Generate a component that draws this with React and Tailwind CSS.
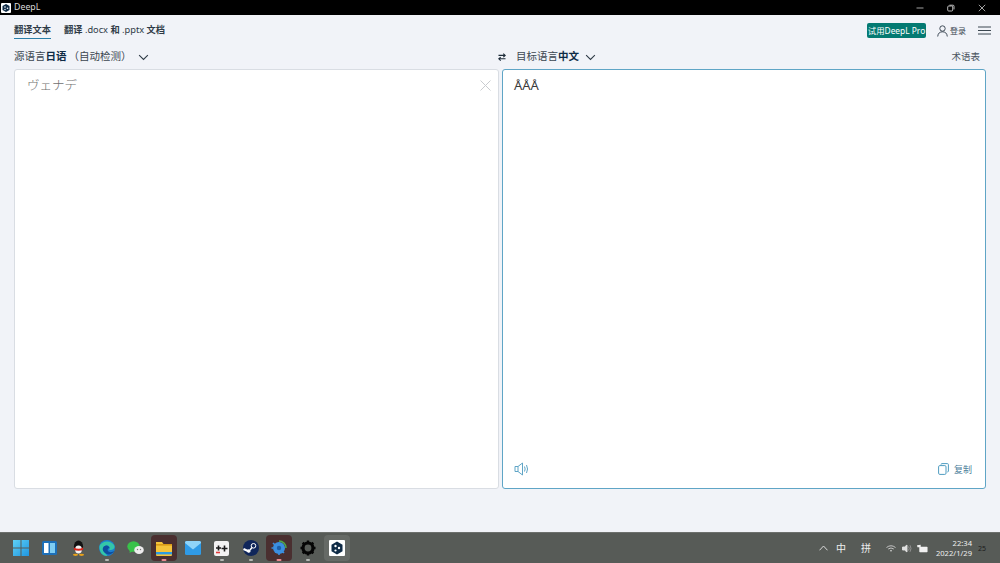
import React from "react";

function Chevron({ className }) {
  return (
    <svg viewBox="0 0 12 8" className={className} fill="none" stroke="currentColor" strokeWidth="1.2">
      <path d="M1 1.2 L6 6.2 L11 1.2" />
    </svg>
  );
}

function Logo({ size = 10 }) {
  return (
    <svg width={size} height={size} viewBox="0 0 20 20">
      <rect width="20" height="20" rx="2" fill="#fff" />
      <path d="M10 2 L17 6 V14 L10 18 L3 14 V6 Z" fill="#0f2b46" />
      <circle cx="8" cy="8" r="1.6" fill="#fff" />
      <circle cx="8" cy="13" r="1.4" fill="#fff" />
      <circle cx="13" cy="10.5" r="1.6" fill="#fff" />
    </svg>
  );
}

function Slot({ children, active, dot, hover }) {
  return (
    <div className={"relative w-[26px] h-[26px] rounded flex items-center justify-center " + (active ? "bg-[#4a2f30]" : hover ? "bg-[#666a66]" : "")}>
      {children}
      {dot && <div className={"absolute bottom-[0px] left-1/2 -translate-x-1/2 h-[2px] rounded " + (active ? "w-[5px] bg-[#e88a90]" : "w-[4px] bg-[#b5b8b5]")} />}
    </div>
  );
}

export default function App() {
  return (
    <div className="w-[1000px] h-[563px] overflow-hidden flex flex-col bg-[#f1f3f8] text-[#2e3a46] font-['Noto_Sans','Noto_Sans_CJK_SC',sans-serif]">
      {/* title bar */}
      <div className="h-[15px] shrink-0 bg-black flex items-center pl-[1px] text-[#d8d8d8]">
        <Logo size={10} />
        <span className="ml-[3px] text-[8.8px] leading-none">DeepL</span>
        <div className="ml-auto flex items-center text-white">
          <div className="w-[31px] flex justify-center">
            <svg width="8" height="8" viewBox="0 0 8 8"><path d="M0.5 4 H7.5" stroke="#ccc" strokeWidth="0.8" /></svg>
          </div>
          <div className="w-[31px] flex justify-center">
            <svg width="8" height="8" viewBox="0 0 8 8" fill="none" stroke="#ccc" strokeWidth="0.9"><rect x="0.7" y="2" width="5" height="5" rx="1" /><path d="M2.4 1.2 H6 Q7 1.2 7 2.2 V5.4" /></svg>
          </div>
          <div className="w-[31px] mr-[3px] flex justify-center">
            <svg width="8" height="8" viewBox="0 0 8 8" stroke="#ccc" strokeWidth="0.8"><path d="M0.8 0.8 L7.2 7.2 M7.2 0.8 L0.8 7.2" /></svg>
          </div>
        </div>
      </div>

      {/* tabs */}
      <div className="h-[27px] shrink-0 flex items-start pl-[14px] pr-[9px]">
        <div className="mt-[8px] flex flex-col">
          <span className="text-[9.25px] leading-[14px] font-bold text-[#2e3a46] whitespace-nowrap">翻译文本</span>
          <div className="h-[1px] mt-[1px] bg-[#2b7fa8] w-[37px]" />
        </div>
        <span className="ml-[13px] mt-[8px] text-[9.25px] leading-[14px] font-bold text-[#2e3a46] whitespace-nowrap">
          翻译<span className="font-normal"> .docx </span>和<span className="font-normal"> .pptx </span>文档
        </span>
        <div className="ml-auto mt-[8px] flex items-center">
          <div className="h-[15px] w-[59px] bg-[#047a72] rounded-[2px] text-[8.4px] leading-[15px] text-center text-white whitespace-nowrap">试用DeepL Pro</div>
          <svg className="ml-[11px]" width="11" height="12" viewBox="0 0 11 12" fill="none" stroke="#2e3a46" strokeWidth="0.9"><circle cx="5.5" cy="3.5" r="2.7" /><path d="M0.7 11.5 C1 8 3 6.8 5.5 6.8 S10 8 10.3 11.5" /></svg>
          <span className="ml-[2px] text-[8px] leading-none text-[#3b4650]">登录</span>
          <svg className="ml-[12px]" width="13" height="9" viewBox="0 0 13 9" stroke="#3b4650" strokeWidth="1"><path d="M0 1 H13 M0 4.5 H13 M0 8 H13" /></svg>
        </div>
      </div>

      {/* language row */}
      <div className="h-[27px] shrink-0 flex items-center pt-[3px] pl-[14px] pr-[20px]">
        <div className="w-[484px] flex items-center text-[10.5px] text-[#3b4650] whitespace-nowrap">
          <span>源语言</span><span className="font-bold text-[#0f2b46]">日语</span>
          <span className="ml-[2px]">（自动检测）</span>
          <Chevron className="ml-[6px] w-[11px] h-[7px] text-[#2e3a46]" />
        </div>
        <svg width="8" height="8" viewBox="0 0 8 8" fill="none" stroke="#1f2d3a" strokeWidth="1.1" className="-mt-[1px]"><path d="M0.5 2.4 H7 M5.3 0.6 L7.2 2.4 L5.3 4.2 M7.5 5.8 H1 M2.7 4.1 L0.8 5.8 L2.7 7.6" /></svg>
        <div className="ml-[10px] flex items-center text-[10.5px] text-[#3b4650] whitespace-nowrap">
          <span>目标语言</span><span className="font-bold text-[#0f2b46]">中文</span>
          <Chevron className="ml-[6px] w-[11px] h-[7px] text-[#2e3a46]" />
        </div>
        <span className="ml-auto text-[9.5px] text-[#4a545e]">术语表</span>
      </div>

      {/* panels */}
      <div className="flex pl-[14px] gap-[3px] h-[420px] shrink-0">
        <div className="w-[485px] bg-white border border-[#d9dde3] rounded-[3px] relative pl-[12px] pt-[6px]">
          <div className="text-[12.5px] leading-[18px] text-[#6f6f6f] font-['Noto_Sans_CJK_JP',sans-serif] font-light">ヴェナデ</div>
          <svg className="absolute top-[10px] right-[7px]" width="11" height="11" viewBox="0 0 11 11" stroke="#c9ccd0" strokeWidth="1"><path d="M0.5 0.5 L10.5 10.5 M10.5 0.5 L0.5 10.5" /></svg>
        </div>
        <div className="w-[484px] bg-white border border-[#5fa5c6] rounded-[3px] flex flex-col pl-[11px] pr-[13px] pt-[6px] pb-[12px]">
          <span className="text-[13px] leading-[18px] text-[#3a3a3a]">ÅÅÅ</span>
          <div className="mt-auto flex items-center justify-between">
            <svg width="16" height="14" viewBox="0 0 16 14" fill="none" stroke="#5fa5c6" strokeWidth="1"><path d="M1 4.5 H4 L8.5 1 V13 L4 9.5 H1 Z M4 4.5 V9.5" /><path d="M10.5 4.5 Q11.8 7 10.5 9.5 M12.5 3 Q14.6 7 12.5 11" /></svg>
            <div className="flex items-center">
              <svg width="11" height="12" viewBox="0 0 11 12" fill="none" stroke="#4f9cc0" strokeWidth="1"><path d="M3 1.6 Q3 0.6 4 0.6 H9.4 Q10.4 0.6 10.4 1.6 V8 Q10.4 9 9.4 9" /><rect x="0.6" y="2.6" width="7.4" height="8.8" rx="1.2" /></svg>
              <span className="ml-[5px] text-[9px] leading-none text-[#4f7f9c]">复制</span>
            </div>
          </div>
        </div>
      </div>

      <div className="flex-1" />

      {/* taskbar */}
      <div className="h-[31px] shrink-0 bg-[#575b57] border-t border-[#6d706d] flex items-center pl-[8px] pr-[14px]">
        <div className="flex items-center gap-[2.7px]">
          <Slot>
            <svg width="16" height="16" viewBox="0 0 16 16"><defs><linearGradient id="win" x1="0" y1="0" x2="1" y2="1"><stop offset="0" stopColor="#5fd0f5" /><stop offset="1" stopColor="#1f96e0" /></linearGradient></defs><path fill="url(#win)" d="M0 0 H7.5 V7.5 H0 Z M8.5 0 H16 V7.5 H8.5 Z M0 8.5 H7.5 V16 H0 Z M8.5 8.5 H16 V16 H8.5 Z" /></svg>
          </Slot>
          <Slot>
            <svg width="15" height="14" viewBox="0 0 15 14"><rect width="15" height="14" rx="1.5" fill="#1d6fb8" /><rect x="2" y="2" width="4.5" height="10" fill="#fff" /><rect x="8" y="2" width="5" height="10" fill="#7fcdf2" /></svg>
          </Slot>
          <Slot>
            <svg width="13" height="16" viewBox="0 0 13 16"><ellipse cx="6.5" cy="6.5" rx="4.6" ry="6" fill="#111" /><ellipse cx="6.5" cy="9.5" rx="3.4" ry="4" fill="#f4f4f4" /><path d="M1.8 7.5 Q6.5 10 11.2 7.5 L11 10 Q6.5 11.5 2 10 Z" fill="#d9261c" /><ellipse cx="3.5" cy="14.8" rx="2.6" ry="1.1" fill="#e9a21b" /><ellipse cx="9.5" cy="14.8" rx="2.6" ry="1.1" fill="#e9a21b" /></svg>
          </Slot>
          <Slot dot>
            <svg width="16" height="16" viewBox="0 0 16 16"><circle cx="8" cy="8" r="8" fill="#1b7fd0" /><path d="M0.5 6 C3 0 13 0 15.5 6 C16 9 13 10.5 10 10 C12 7 9.5 5 7 5.5 C3.5 6.2 2.5 10 6 13 C7 14 8 15 8 16 C3 16 0 11 0.5 6 Z" fill="#34c6a8" /><path d="M7 5.5 C3.5 6.2 2.5 10 6 13 C9 15.5 13 14.5 15.5 11 C13 12.5 10 12.5 9 11 C8 9.5 9 8 10.5 8 C10 6 8.5 5.2 7 5.5 Z" fill="#0e4d9e" /></svg>
          </Slot>
          <Slot>
            <svg width="17" height="14" viewBox="0 0 17 14"><ellipse cx="6.5" cy="5.5" rx="6.2" ry="5.2" fill="#39c24a" /><path d="M3 9 L2.5 12 L6 10 Z" fill="#39c24a" /><ellipse cx="12" cy="9" rx="4.8" ry="4" fill="#ededed" /><circle cx="10.5" cy="8.5" r="0.7" fill="#777" /><circle cx="13.5" cy="8.5" r="0.7" fill="#777" /></svg>
          </Slot>
          <Slot active dot>
            <svg width="16" height="15" viewBox="0 0 16 15"><path d="M0 1 H6 L7.5 3 H16 V14 Q16 15 15 15 H1 Q0 15 0 14 Z" fill="#f5c33b" /><rect x="0" y="3" width="16" height="1.6" fill="#d99a16" /><rect x="0" y="11" width="16" height="2.4" fill="#2c9ae0" /></svg>
          </Slot>
          <Slot>
            <svg width="16" height="14" viewBox="0 0 16 14"><rect width="16" height="14" rx="1.5" fill="#2f9be6" /><path d="M0 2 L8 8.5 L16 2 V1.5 Q16 0 14.5 0 H1.5 Q0 0 0 1.5 Z" fill="#8fd4f8" /></svg>
          </Slot>
          <Slot dot>
            <svg width="15" height="15" viewBox="0 0 15 15"><rect width="15" height="15" rx="2" fill="#f2f2f2" /><path d="M2 7 H7 M4.5 4.5 V9.5 M7.5 7.5 H13.5 M10.5 4.5 V10.5" stroke="#1a1a1a" strokeWidth="1.6" /><path d="M2 11.5 H6" stroke="#e03a3a" strokeWidth="1.6" /></svg>
          </Slot>
          <Slot dot>
            <svg width="16" height="16" viewBox="0 0 16 16"><circle cx="8" cy="8" r="8" fill="#10265a" /><circle cx="10.5" cy="5.8" r="2.3" fill="none" stroke="#fff" strokeWidth="1" /><path d="M0.5 9 L6 11.5" stroke="#fff" strokeWidth="2" /><circle cx="5.8" cy="11" r="1.8" fill="#fff" /><path d="M7 10 L9 7.5" stroke="#fff" strokeWidth="1.4" /></svg>
          </Slot>
          <Slot active dot>
            <svg width="16" height="16" viewBox="0 0 16 16"><circle cx="8" cy="8" r="6" fill="#3b8fe0" /><path d="M8 1 A7 7 0 0 1 15 8" fill="none" stroke="#4fa84a" strokeWidth="1.6" /><path d="M2 3 L4 5 M2 8 H0.5 M8 15 V13 M13 13 L11.5 11.5" stroke="#3b8fe0" strokeWidth="1.6" /><circle cx="8" cy="8" r="2.2" fill="#1d5fa8" /></svg>
          </Slot>
          <Slot dot>
            <svg width="16" height="16" viewBox="0 0 16 16"><circle cx="8" cy="8" r="5" fill="none" stroke="#050505" strokeWidth="3.2" /><path d="M8 0.5 V3 M8 13 V15.5 M0.5 8 H3 M13 8 H15.5 M2.7 2.7 L4.5 4.5 M11.5 11.5 L13.3 13.3 M13.3 2.7 L11.5 4.5 M4.5 11.5 L2.7 13.3" stroke="#050505" strokeWidth="2.4" /></svg>
          </Slot>
          <Slot hover>
            <svg width="16" height="16" viewBox="0 0 16 16"><rect width="16" height="16" rx="1" fill="#fff" /><path d="M8 1.5 L13.5 4.7 V11.3 L8 14.5 L2.5 11.3 V4.7 Z" fill="#0f2b46" /><circle cx="6.5" cy="6" r="1.2" fill="#fff" /><circle cx="6.5" cy="10.5" r="1.1" fill="#fff" /><circle cx="10" cy="8" r="1.2" fill="#fff" /></svg>
          </Slot>
        </div>

        <div className="ml-auto flex items-center text-[#eeeeee]">
          <svg width="9" height="6" viewBox="0 0 9 6" fill="none" stroke="#e6e6e6" strokeWidth="0.9"><path d="M0.5 5.3 L4.5 1 L8.5 5.3" /></svg>
          <span className="ml-[8px] text-[10px] leading-none">中</span>
          <span className="ml-[15px] text-[10px] leading-none">拼</span>
          <svg className="ml-[15px]" width="10" height="7" viewBox="0 0 10 7" fill="none" stroke="#d0d0d0" strokeWidth="0.9"><path d="M0.5 2.5 Q5 -1 9.5 2.5 M2.2 4 Q5 2 7.8 4" /><circle cx="5" cy="5.8" r="0.8" fill="#e8e8e8" stroke="none" /></svg>
          <svg className="ml-[6px]" width="10" height="9" viewBox="0 0 10 9" fill="none" stroke="#e0e0e0" strokeWidth="0.9"><path d="M0.5 3 H2.5 L5 1 V8 L2.5 6 H0.5 Z" fill="#e0e0e0" /><path d="M6.5 2.5 Q8 4.5 6.5 6.5 M8 1.2 Q10 4.5 8 7.8" stroke="#999" /></svg>
          <svg className="ml-[5px]" width="11" height="9" viewBox="0 0 12 9"><rect x="2.5" y="2.5" width="9" height="6" rx="0.8" fill="#f1f1f1" /><path d="M0 1 L4 0.5 L4 3 L0.5 3 Z" fill="#f1f1f1" /></svg>
          <div className="ml-[9px] w-[35px] flex flex-col items-end text-[7.6px] leading-[10px] text-[#eeeeee] whitespace-nowrap">
            <span>22:34</span>
            <span>2022/1/29</span>
          </div>
          <span className="ml-[6px] mt-[1px] w-[8px] text-[7px] leading-none text-[#1c1c1c]">25</span>
        </div>
      </div>
    </div>
  );
}
